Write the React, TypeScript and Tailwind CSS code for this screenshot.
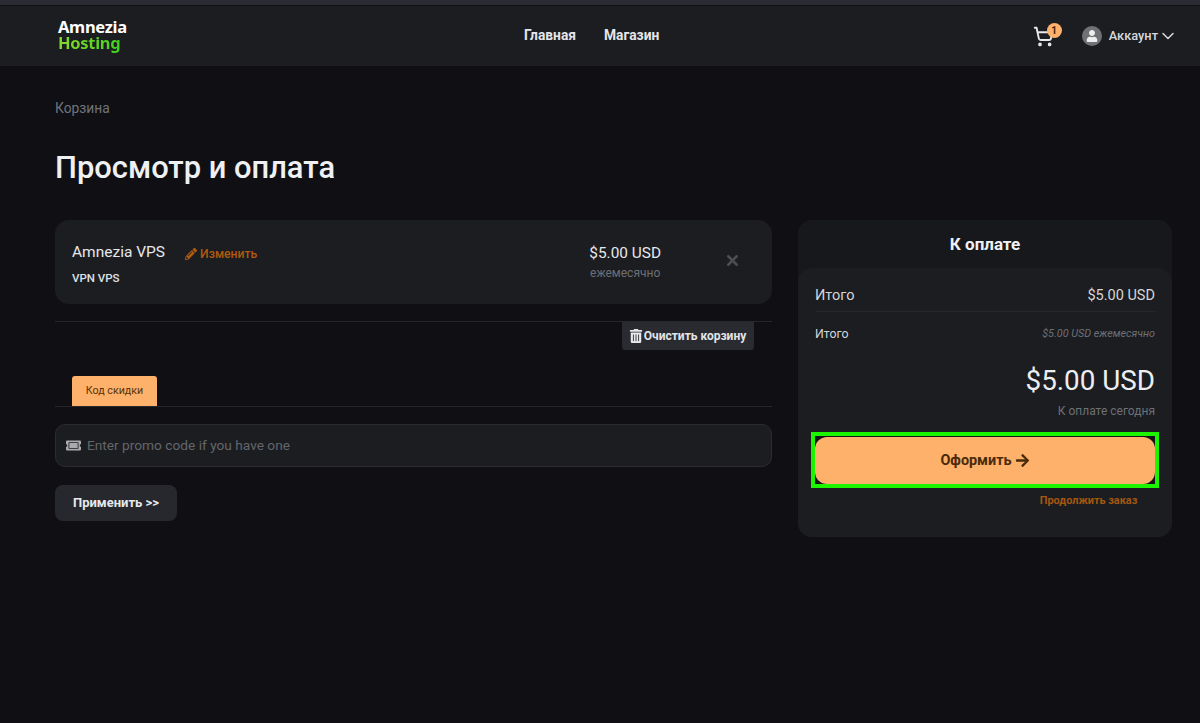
import React from 'react';
import { ChevronDown, ShoppingCart, X } from 'lucide-react';
import { FaArrowRight, FaPencilAlt, FaTrashAlt, FaTicketAlt, FaUser } from 'react-icons/fa';

function Header() {
  return (
    <header className="h-[66px] bg-[#1c1d21] border-t-[5px] border-[#2b2b33] flex items-center justify-between pl-[58px] pr-[22px] relative">
      <div className="absolute top-0 left-0 right-0 h-px bg-[#111114]" />
      <div className="font-['Noto_Sans',sans-serif] font-bold text-[16.5px] leading-[16px] tracking-[-0.3px] -mt-[2px]">
        <div className="text-white">Amnezia</div>
        <div className="text-transparent bg-clip-text bg-gradient-to-r from-[#84d82c] to-[#3cd01c] w-fit pb-[5px] -mb-[5px]">Hosting</div>
      </div>
      <nav className="absolute left-[524px] top-[16px] flex gap-[28px] text-[13.8px] leading-[28px] font-bold text-[#e4e6ea]">
        <span>Главная</span>
        <span>Магазин</span>
      </nav>
      <div className="flex items-center gap-[28px]">
        <div className="relative mt-[2px]">
          <ShoppingCart className="text-[#e8e8ea]" size={21} strokeWidth={2.2} />
          <span className="absolute -top-[3px] left-[14px] w-[15px] h-[15px] rounded-full bg-[#fdb16a] text-[#3d2408] text-[10px] leading-[15px] font-bold text-center">1</span>
        </div>
        <div className="flex items-center gap-[7px] text-[12.8px] font-medium text-[#d6d9de]">
          <span className="w-5 h-5 rounded-full bg-[#6f7175] flex items-center justify-center overflow-hidden">
            <FaUser className="text-[#eeeeee]" size={12} />
          </span>
          <span>Аккаунт</span>
          <ChevronDown size={20} strokeWidth={1.8} className="-ml-[7px]" />
        </div>
      </div>
    </header>
  );
}

function CartItem() {
  return (
    <div className="h-[84px] bg-[#1c1d21] rounded-[14px] pl-[17px] pr-[31px] flex items-center justify-between">
      <div className="pt-[4px]">
        <div className="flex items-center gap-[20px] h-[24px]">
          <span className="text-[15.5px] text-[#e6e8ec] -mt-[1px]">Amnezia VPS</span>
          <a className="flex items-center gap-[3px] text-[12.2px] font-medium text-[#b05a0e] pt-[2px]">
            <FaPencilAlt size={12} />
            Изменить
          </a>
        </div>
        <div className="mt-[5px] text-[11.5px] font-medium text-[#dfe1e5]">VPN VPS</div>
      </div>
      <div className="flex items-center gap-[63px]">
        <div className="text-center pt-[2px]">
          <div className="text-[15.4px] leading-[20px] text-[#e6e8ec]">$5.00 USD</div>
          <div className="text-[12px] leading-[20px] text-[#6d7075]">ежемесячно</div>
        </div>
        <X size={17} strokeWidth={3.5} className="text-[#4c4e52] mb-[4px]" />
      </div>
    </div>
  );
}

function PromoSection() {
  return (
    <div>
      <div className="mt-[17px] border-t border-[#26272b] flex justify-end pr-[18px]">
        <button className="h-[28px] w-[132px] bg-[#2a2b30] rounded-b-[3px] flex items-center justify-center gap-px pr-px text-[12px] font-bold text-[#e2e4e8]">
          <FaTrashAlt size={14} className="text-[#e8e8ea]" />
          Очистить корзину
        </button>
      </div>
      <div className="mt-[26px] border-b border-[#26272b] pl-[17px]">
        <div className="w-[85px] h-[30px] bg-[#fdb16a] rounded-t-[3px] text-center text-[10.7px] leading-[30px] text-[#5a3208]">
          Код скидки
        </div>
      </div>
      <div className="mt-[17px] h-[43px] bg-[#1c1d21] border border-[#2b2c30] rounded-[10px] flex items-center pl-[10px] gap-[6px]">
        <FaTicketAlt size={15} className="text-[#a9abaf]" />
        <span className="text-[13.7px] text-[#63666b]">Enter promo code if you have one</span>
      </div>
      <button className="mt-[18px] w-[122px] h-[36px] bg-[#27282d] rounded-[8px] text-[13px] font-bold text-[#e6e8ec]">
        Применить &gt;&gt;
      </button>
    </div>
  );
}

function Summary() {
  return (
    <aside className="w-[374px] h-[317px] bg-[#17181c] rounded-[14px] flex flex-col">
      <div className="h-[48px] pt-px flex items-center justify-center text-[17px] font-bold text-[#f0f1f4]">К оплате</div>
      <div className="flex-1 bg-[#1c1d21] rounded-[14px] px-[17px] pt-[16px]">
        <div className="flex justify-between items-center h-[23px] pb-[4px] box-content border-b border-[#26272b]">
          <span className="text-[14.5px] text-[#d4d6da]">Итого</span>
          <span className="text-[14.5px] text-[#d4d6da]">$5.00 USD</span>
        </div>
        <div className="flex justify-between items-center mt-[12px] h-[20px]">
          <span className="text-[12.3px] text-[#d4d6da]">Итого</span>
          <span className="text-[10.8px] italic text-[#6d7075]">$5.00 USD ежемесячно</span>
        </div>
        <div className="mt-[20px] text-right text-[27.8px] leading-[34px] text-[#eceef1]">$5.00 USD</div>
        <div className="mt-[4px] text-right text-[12px] leading-[18px] text-[#6d7075]">К оплате сегодня</div>
        <div className="mt-[12px] -mx-[4px] border-[4px] border-[#1cf400] bg-[#131418] pt-[1px]">
          <button className="w-full h-[47px] bg-[#fdb16a] rounded-[12px] flex items-center justify-center gap-[3px] text-[14.4px] font-bold text-[#4a2a08]">
            Оформить
            <FaArrowRight size={15} />
          </button>
        </div>
        <div className="mt-[5px] pl-[208px] pr-px text-center text-[10.9px] leading-[16px] font-bold text-[#a4570f] whitespace-nowrap">
          Продолжить заказ
        </div>
      </div>
    </aside>
  );
}

export default function App() {
  return (
    <div className="min-h-[723px] bg-[#101014] font-['Roboto',sans-serif]">
      <Header />
      <main className="pl-[55px] pr-[28px]">
        <div className="pt-[33px] text-[13.8px] leading-[18px] text-[#6f747c]">Корзина</div>
        <h1 className="mt-[29px] text-[30.9px] leading-[44px] font-medium text-[#eef0f3]">Просмотр и оплата</h1>
        <div className="mt-[30px] flex justify-between items-start">
          <div className="w-[717px]">
            <CartItem />
            <PromoSection />
          </div>
          <Summary />
        </div>
      </main>
    </div>
  );
}
